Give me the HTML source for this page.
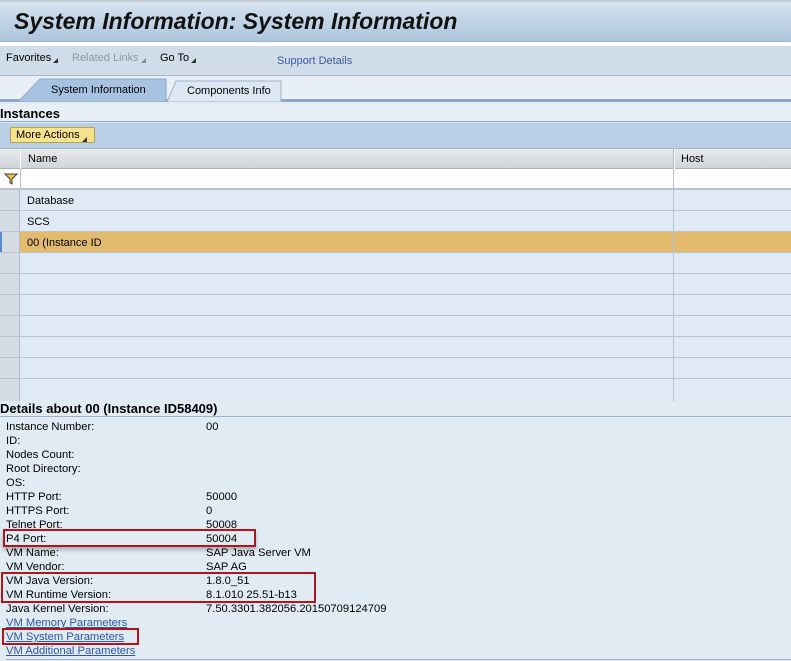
<!DOCTYPE html>
<html><head><style>
*{margin:0;padding:0;box-sizing:border-box}
body{width:791px;height:661px;overflow:hidden;background:#e1ebf4;font-family:"Liberation Sans",Arial,sans-serif;font-size:11px;color:#000;position:relative}
.a{position:absolute}
.title{left:0;top:0;width:791px;height:42px;border-top:2px solid #c4cdd6;background:linear-gradient(#d6e3ef,#adc5dd);border-bottom:1px solid #9fb6cc}
.title span{position:absolute;left:14px;top:6px;font-size:23px;font-weight:bold;font-style:italic;color:#111}
.tb{left:0;top:46px;width:791px;height:30px;background:#d0dde8;border-bottom:1px solid #a8b6c4}
.tb span{position:absolute;top:6px;font-size:11px}
.tri{display:inline-block;width:0;height:0;border-left:5px solid transparent;border-bottom:5px solid #333;margin-left:2px;vertical-align:-4px}
.tri.g{border-bottom-color:#889}
.tabs{left:0;top:76px;width:791px;height:26px;background:#e8eff7;border-bottom:3px solid #8ea9c8}
.row{left:0;width:791px;height:21px;background:#dfeaf4;border-bottom:1px solid #b6c4d2}
.sel{position:absolute;left:0;top:0;width:20px;height:100%;background:#d5dce3;border-right:1px solid #b0bcc8}
.col{position:absolute;left:673px;top:0;width:1px;height:100%;background:#b6c4d2}
.row span{position:absolute;left:27px;top:5px}
.lab{left:6px}
.val{left:206px}
.d{font-size:11.2px}
.lnk{color:#2d55a8;text-decoration:underline}
.red{border:2px solid #b0151c}
</style></head><body>
<div class="a title"><span>System Information: System Information</span></div>
<div class="a" style="left:0;top:42px;width:791px;height:4px;background:#fff"></div>
<div class="a tb">
<span style="left:6px">Favorites<span class="tri"></span></span>
<span style="left:72px;color:#8899aa">Related Links<span class="tri g"></span></span>
<span style="left:160px">Go To<span class="tri"></span></span>
<span style="left:277px;top:9px;color:#3b5aa6">Support Details</span>
</div>
<div class="a tabs">
<svg class="a" style="left:18px;top:2px" width="264" height="24"><polygon points="0,24 22,1 148,1 148,24" fill="#a8c3e2" stroke="#8ea9c8"/><polygon points="149,24 158,3 263,3 263,24" fill="#dde8f4" stroke="#9fb2c8"/></svg>
<span class="a" style="left:51px;top:8px">System Information</span>
<span class="a" style="left:187px;top:9px">Components Info</span>
</div>
<div class="a" style="left:0;top:104px;width:791px;height:18px;background:#e8eff6;border-bottom:1px solid #8ea9c8"><span class="a" style="left:0;top:2px;font-size:13px;font-weight:bold">Instances</span></div>
<div class="a" style="left:0;top:123px;width:791px;height:25px;background:#b8cfe6"></div>
<div class="a" style="left:10px;top:127px;width:85px;height:16px;background:#f7e38c;border:1px solid #b8a24f;border-radius:2px;padding:1px 0 0 5px">More Actions<span class="tri"></span></div>
<div class="a" style="left:0;top:148px;width:791px;height:21px;background:linear-gradient(#e8eaec,#d0d4d8);border-bottom:1px solid #aab4be;border-top:1px solid #a8b6c4">
<div class="a" style="left:20px;top:0;width:1px;height:20px;background:#fff"></div>
<span class="a" style="left:28px;top:4px">Name</span>
<div class="a" style="left:673px;top:0;width:2px;height:20px;background:#fff;border-left:1px solid #b0b8c0"></div>
<span class="a" style="left:681px;top:4px">Host</span>
</div>
<div class="a" style="left:0;top:169px;width:791px;height:21px;background:#fff;border-bottom:2px solid #b6c4d2">
<svg class="a" style="left:4px;top:4px" width="14" height="12"><path d="M1 1h12l-5 5v5l-2-1v-4z" fill="#f0c040" stroke="#444" stroke-width="1"/></svg>
<div class="a" style="left:20px;top:0;width:1px;height:20px;background:#b6c4d2"></div>
<div class="col"></div>
</div>
<div class="a row" style="top:190px"><div class="sel"></div><div class="col"></div><span>Database</span></div>
<div class="a row" style="top:211px"><div class="sel"></div><div class="col"></div><span>SCS</span></div>
<div class="a row" style="top:232px;background:#e3bb6e"><div class="sel" style="border-left:2px solid #5a8ad0"></div><div class="col"></div><span>00 (Instance ID</span></div>
<div class="a row" style="top:253px"><div class="sel"></div><div class="col"></div></div>
<div class="a row" style="top:274px"><div class="sel"></div><div class="col"></div></div>
<div class="a row" style="top:295px"><div class="sel"></div><div class="col"></div></div>
<div class="a row" style="top:316px"><div class="sel"></div><div class="col"></div></div>
<div class="a row" style="top:337px"><div class="sel"></div><div class="col"></div></div>
<div class="a row" style="top:358px"><div class="sel"></div><div class="col"></div></div>
<div class="a row" style="top:379px;height:22px;border-bottom:none"><div class="sel"></div><div class="col"></div></div>
<div class="a" style="left:0;top:401px;width:791px;height:16px;border-bottom:1px solid #9fb2c8"><span class="a" style="left:0;top:0;font-size:13px;font-weight:bold">Details about 00 (Instance ID58409)</span></div>
<div class="d">
<div class="a lab" style="top:421px">Instance Number:</div><div class="a val" style="top:421px">00</div>
<div class="a lab" style="top:435px">ID:</div>
<div class="a lab" style="top:449px">Nodes Count:</div>
<div class="a lab" style="top:463px">Root Directory:</div>
<div class="a lab" style="top:477px">OS:</div>
<div class="a lab" style="top:491px">HTTP Port:</div><div class="a val" style="top:491px">50000</div>
<div class="a lab" style="top:505px">HTTPS Port:</div><div class="a val" style="top:505px">0</div>
<div class="a lab" style="top:519px">Telnet Port:</div><div class="a val" style="top:519px">50008</div>
<div class="a lab" style="top:533px">P4 Port:</div><div class="a val" style="top:533px">50004</div>
<div class="a lab" style="top:547px">VM Name:</div><div class="a val" style="top:547px">SAP Java Server VM</div>
<div class="a lab" style="top:561px">VM Vendor:</div><div class="a val" style="top:561px">SAP AG</div>
<div class="a lab" style="top:575px">VM Java Version:</div><div class="a val" style="top:575px">1.8.0_51</div>
<div class="a lab" style="top:589px">VM Runtime Version:</div><div class="a val" style="top:589px">8.1.010 25.51-b13</div>
<div class="a lab" style="top:603px">Java Kernel Version:</div><div class="a val" style="top:603px">7.50.3301.382056.20150709124709</div>
<div class="a lab lnk" style="top:617px">VM Memory Parameters</div>
<div class="a lab lnk" style="top:631px">VM System Parameters</div>
<div class="a lab lnk" style="top:645px">VM Additional Parameters</div>
</div>
<div class="a" style="left:6px;top:659px;width:785px;height:1px;background:#9fb2c8"></div>
<div class="a red" style="left:3px;top:529px;width:253px;height:18px;box-shadow:0 3px 4px rgba(0,0,0,.25)"></div>
<div class="a red" style="left:1px;top:572px;width:315px;height:31px"></div>
<div class="a red" style="left:2px;top:628px;width:137px;height:17px"></div>
</body></html>
